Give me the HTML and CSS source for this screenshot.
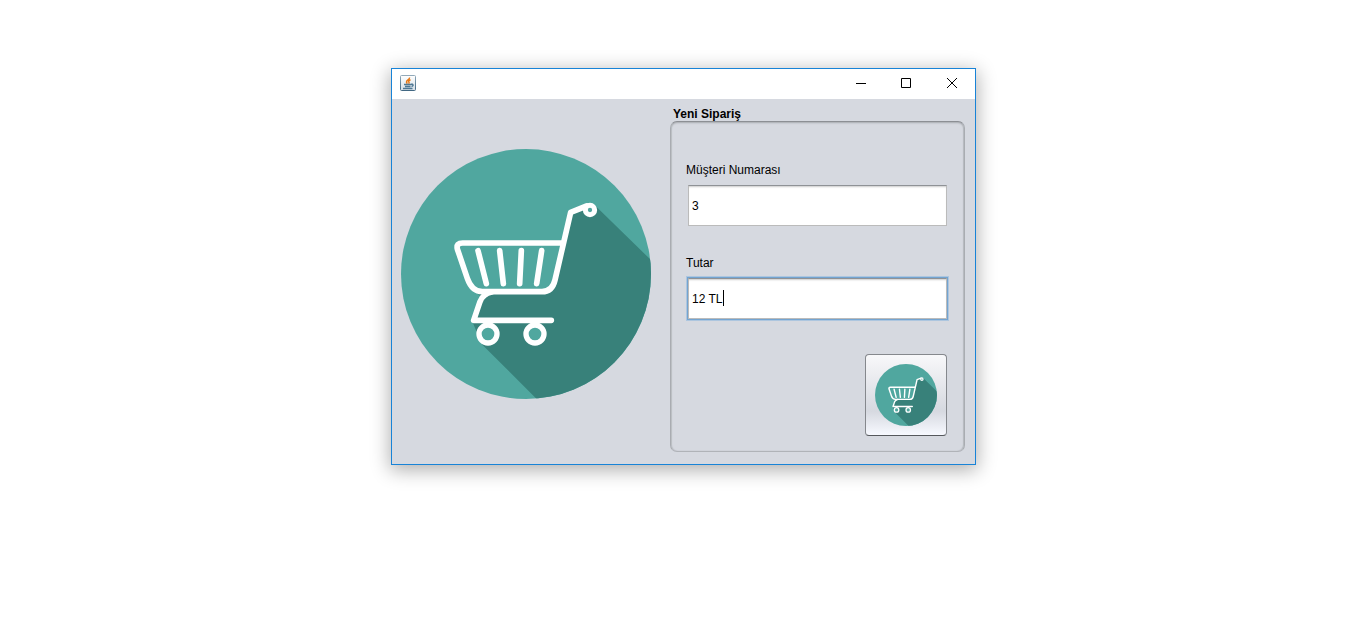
FILE: index.html
```html
<!DOCTYPE html>
<html lang="tr">
<head>
<meta charset="utf-8">
<title>Yeni Sipariş</title>
<link rel="stylesheet" href="styles.css">
</head>
<body>
<svg class="defs" aria-hidden="true">
  <defs>
    <clipPath id="disc"><circle cx="393" cy="402" r="375"/></clipPath>
  </defs>
  <symbol id="cart" viewBox="18 27 750 750">
    <circle cx="393" cy="402" r="375" fill="#50a79f"/>
    <path clip-path="url(#disc)" fill="#38817a" d="M601 197 780 372V800H448L262 614 232 545 262 475 228 441 500 309 527 215 580 202Z"/>
    <path fill="#50a79f" d="M499 309H203Q183 309 187 327L217 415Q231 455 262 455H441Q472 455 480 420Z"/>
    <g fill="none" stroke="#fff" stroke-width="17" stroke-linecap="round" stroke-linejoin="round">
      <path d="M499 309H203Q183 309 187 327L217 415Q231 455 262 455H441Q472 455 480 420L527 217 575 198"/>
      <path d="M249 332 274 431M314 332 325 431M379 332 374 431M440 332 425 431"/>
      <path d="M290 456Q264 461 255 485L236 541H469"/>
    </g>
    <g fill="#50a79f" stroke="#fff">
      <circle cx="585" cy="210" r="14" stroke-width="15"/>
      <circle cx="279" cy="582" r="27" stroke-width="16"/>
      <circle cx="420" cy="582" r="27" stroke-width="16"/>
    </g>
  </symbol>
</svg>
<div class="window">
  <header class="titlebar">
    <svg class="java-icon" viewBox="0 0 16 16" aria-hidden="true">
      <defs>
        <linearGradient id="tile" x1="0" y1="0" x2="0" y2="1"><stop offset="0" stop-color="#fff"/><stop offset="1" stop-color="#d5dfe7"/></linearGradient>
        <linearGradient id="edge" x1="0" y1="0" x2="0" y2="1"><stop offset="0" stop-color="#91a9b9"/><stop offset="1" stop-color="#426883"/></linearGradient>
      </defs>
      <rect x=".5" y=".5" width="15" height="15" rx="1" fill="url(#tile)" stroke="url(#edge)"/>
      <path d="M9.500 2.500C10 4.500 6 5.200 6.500 7.200Q6.700 8 7.500 8.500M10.500 4.800Q7.800 5.800 9 7.200 9.500 8 8.500 8.700" fill="none" stroke="#e77918" stroke-width="1.500"/>
      <path d="M4 9.500H11M5 11.500H10.500M11 9.200H12.500Q14 10.500 11.500 11.500M3 13.500H12.500" fill="none" stroke="#4f7894" stroke-width="1.500"/>
    </svg>
    <div class="window-controls">
      <button class="control" type="button" aria-label="Simge durumuna küçült"><svg viewBox="0 0 10 10"><path d="M1 5.500H11"/></svg></button>
      <button class="control" type="button" aria-label="Ekranı kapla"><svg viewBox="0 0 10 10"><path d="M.5 .5H9.500V9.500H.5Z"/></svg></button>
      <button class="control" type="button" aria-label="Kapat"><svg viewBox="0 0 10 10"><path d="M0 0 10 10M10 0 0 10"/></svg></button>
    </div>
  </header>
  <main class="content">
    <svg class="logo" role="img" aria-label="Alışveriş sepeti"><use href="#cart"/></svg>
    <form class="order">
      <h1 class="order-title">Yeni Sipariş</h1>
      <div class="panel">
        <div class="field">
          <label class="label" for="customer">Müşteri Numarası</label>
          <input class="input" id="customer" type="text" value="3">
        </div>
        <div class="field">
          <label class="label" for="amount">Tutar</label>
          <input class="input input-active" id="amount" type="text" value="12 TL">
          <span class="caret"></span>
        </div>
        <button class="submit" type="button" aria-label="Siparişi ekle"><svg class="submit-icon"><use href="#cart"/></svg></button>
      </div>
    </form>
  </main>
</div>
</body>
</html>
```
FILE: styles.css
```css
* { box-sizing: border-box; }
body {
  margin: 0;
  padding: 68px 0 68px 2px;
  background: #fff;
  color: #000;
  font: 12px/16px "Liberation Sans", Arial, sans-serif;
}
.defs { position: absolute; width: 0; height: 0; }
.window {
  max-width: 585px;
  margin: 0 auto;
  border: 1px solid #1883d7;
  background: #d6d9e0;
  box-shadow: 0 4px 18px 1px rgba(0, 0, 0, .32);
}
.titlebar {
  display: flex;
  justify-content: space-between;
  height: 30px;
  padding-left: 8px;
  background: #fff;
}
.java-icon { width: 16px; height: 16px; margin-top: 6px; }
.window-controls { display: flex; }
.control {
  width: 46px;
  height: 28px;
  padding: 0;
  border: 0;
  background: none;
}
.control svg {
  display: block;
  width: 10px;
  height: 10px;
  margin: 0 auto;
  overflow: visible;
  fill: none;
  stroke: #000;
}
.content {
  display: grid;
  grid-template-columns: 250px 1fr;
  gap: 19px;
  padding: 8px 10px 12px 9px;
}
.logo { display: block; width: 250px; height: 250px; margin-top: 42px; }
.order-title { margin: 0 0 0 3px; font-size: 12px; line-height: 14px; }
.panel {
  display: flex;
  flex-direction: column;
  padding: 40px 17px 15px 15px;
  border: 1px solid #a9acb1;
  border-top-color: #8c8f94;
  border-bottom-color: #b0b3b8;
  border-radius: 7px;
  box-shadow: inset 0 2px 2px -1px #a9acb1, inset 1px 0 1px #bbbec4, inset -1px 0 1px #b5b8be;
}
.field { position: relative; margin-bottom: 29px; }
.label { display: block; margin-bottom: 7px; }
.input {
  display: block;
  width: calc(100% - 2px);
  height: 41px;
  margin-left: 2px;
  padding: 0 3px;
  border: 1px solid #bbb;
  border-top-color: #8f9296;
  border-radius: 0;
  outline: 0;
  background: #fff;
  box-shadow: inset 0 2px 2px -1px #ccc;
  font: inherit;
  color: inherit;
}
.input-active { box-shadow: inset 0 2px 2px -1px #ccc, 0 0 0 1px #73a4d1, 0 0 0 2px #adc6df; }
.caret {
  position: absolute;
  left: 37px;
  bottom: 13px;
  width: 1px;
  height: 16px;
  background: #000;
}
.submit {
  align-self: flex-end;
  width: 82px;
  height: 82px;
  margin-top: 6px;
  padding: 0;
  border: 1px solid #85888d;
  border-bottom-color: #55585c;
  border-radius: 4px;
  background: linear-gradient(#f8f8fa, #d6d9e0 70%, #f7f9ff);
}
.submit-icon { display: block; width: 62px; height: 62px; margin: 0 auto; }
```
